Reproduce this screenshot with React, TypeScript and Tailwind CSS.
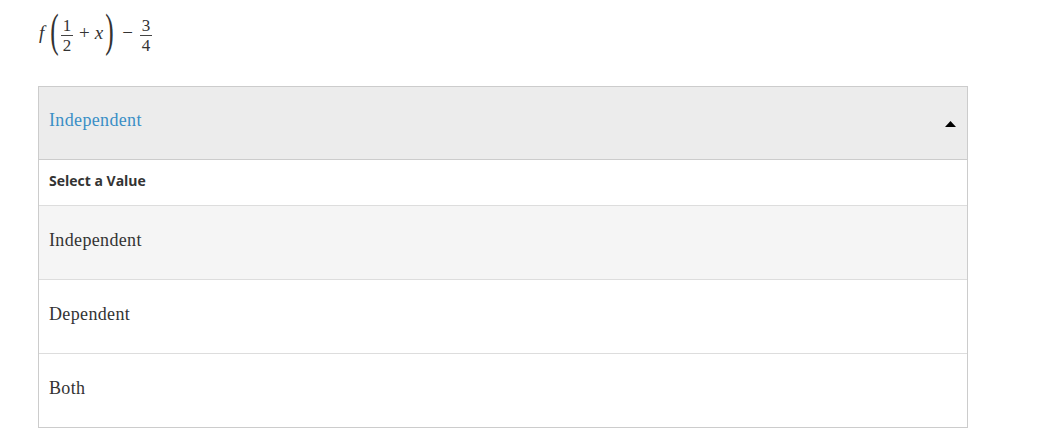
import React from "react";

function Frac({ n, d }: { n: string; d: string }) {
  return (
    <span className="inline-flex flex-col items-center">
      <span className="text-[17px] leading-[19px] px-[1px]">{n}</span>
      <span className="block h-[1px] w-[12px] bg-[#444]" />
      <span className="text-[17px] leading-[19px] px-[1px]">{d}</span>
    </span>
  );
}

export default function App() {
  const serif = { fontFamily: '"Liberation Serif", "Times New Roman", serif' };
  const sans = { fontFamily: '"Open Sans", sans-serif' };
  return (
    <div className="w-[1039px] h-[448px] bg-white relative overflow-hidden">
      <div className="pl-[39px] pt-[13px] h-[86px]">
        <div className="flex items-center text-[#333] text-[19px] h-[40px]" style={serif}>
          <span className="italic w-[10px]">f</span>
          <span className="text-[46px] leading-[40px] font-light scale-x-[0.55] w-[9px] flex justify-center mt-[-5px] ml-[1px]">(</span>
          <span className="ml-[2px]"><Frac n="1" d="2" /></span>
          <span className="ml-[6px]">+</span>
          <span className="italic ml-[5px]">x</span>
          <span className="text-[46px] leading-[40px] font-light scale-x-[0.55] w-[9px] flex justify-center mt-[-5px] ml-[2px]">)</span>
          <span className="ml-[8px]">−</span>
          <span className="ml-[7px]"><Frac n="3" d="4" /></span>
        </div>
      </div>
      <div className="ml-[38px] w-[930px] border border-[#cccccc]">
        <div className="h-[73px] bg-[#ececec] flex items-center justify-between pl-[10px] pr-[10px] pb-[5px] border-b border-[#cccccc]">
          <span className="text-[18px] tracking-[0.35px] text-[#3a8fc6]" style={serif}>Independent</span>
          <svg width="11" height="6" viewBox="0 0 11 6" className="mr-[1px] mt-[6px]">
            <polygon points="5.5,0 11,6 0,6" fill="#000" />
          </svg>
        </div>
        <div className="h-[46px] flex items-center pl-[10px] pb-[5px] border-b border-[#dddddd]">
          <span className="text-[14px] font-bold text-[#333]" style={sans}>Select a Value</span>
        </div>
        <div className="h-[74px] bg-[#f5f5f5] flex items-center pl-[10px] pb-[5px] border-b border-[#dddddd]">
          <span className="text-[18px] tracking-[0.35px] text-[#333]" style={serif}>Independent</span>
        </div>
        <div className="h-[74px] flex items-center pl-[10px] pb-[5px] border-b border-[#dddddd]">
          <span className="text-[18px] tracking-[0.35px] text-[#333]" style={serif}>Dependent</span>
        </div>
        <div className="h-[73px] flex items-center pl-[10px] pb-[5px]">
          <span className="text-[18px] tracking-[0.35px] text-[#333]" style={serif}>Both</span>
        </div>
      </div>
    </div>
  );
}
